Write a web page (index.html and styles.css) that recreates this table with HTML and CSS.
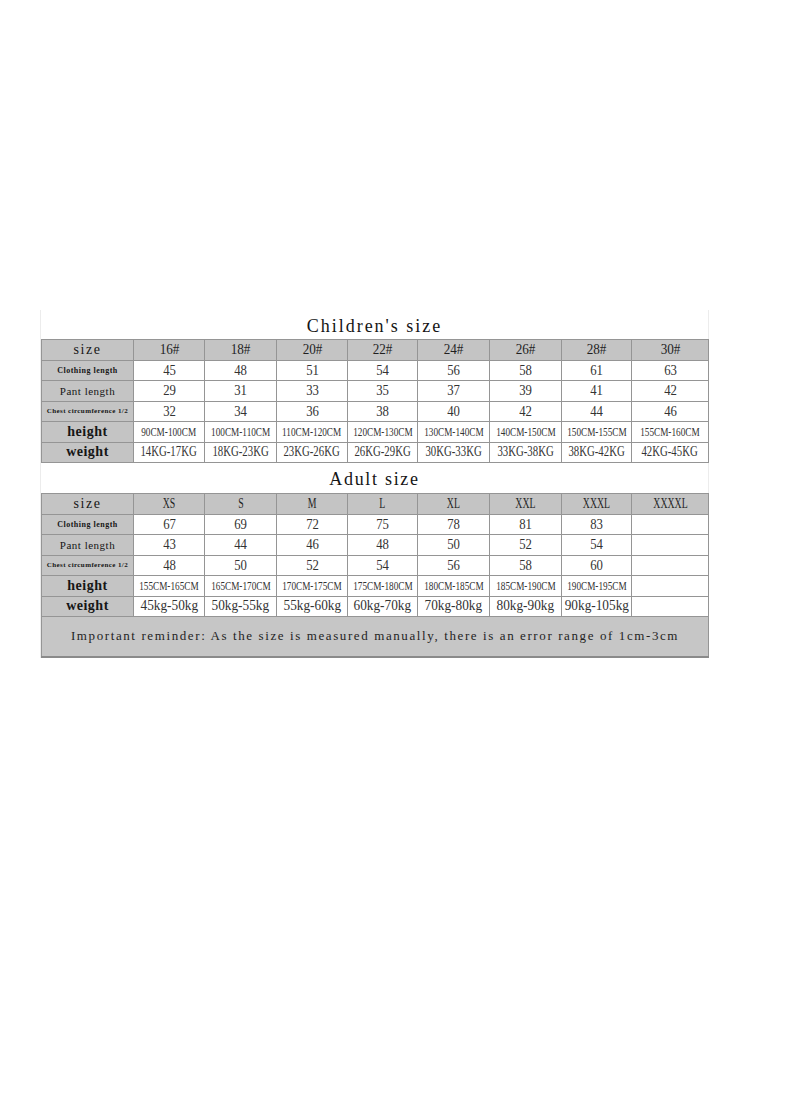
FILE: index.html
```html
<!DOCTYPE html>
<html lang="en">
<head>
<meta charset="utf-8">
<title>Size chart</title>
<link rel="stylesheet" href="styles.css">
</head>
<body>
<div class="page">
  <div class="sheet">
    <div class="title">Children's size</div>
    <table class="chart">
      <colgroup>
        <col class="c0"><col class="c1"><col class="c2"><col class="c3"><col class="c4"><col class="c5"><col class="c6"><col class="c7"><col class="c8">
      </colgroup>
      <tr class="head">
        <th class="lab l-size">size</th><th><span class="s">16#</span></th><th><span class="s">18#</span></th><th><span class="s">20#</span></th><th><span class="s">22#</span></th><th><span class="s">24#</span></th><th><span class="s">26#</span></th><th><span class="s">28#</span></th><th><span class="s">30#</span></th>
      </tr>
      <tr class="num">
        <th class="lab l-cloth">Clothing length</th><td><span class="s">45</span></td><td><span class="s">48</span></td><td><span class="s">51</span></td><td><span class="s">54</span></td><td><span class="s">56</span></td><td><span class="s">58</span></td><td><span class="s">61</span></td><td><span class="s">63</span></td>
      </tr>
      <tr class="num">
        <th class="lab l-pant">Pant length</th><td><span class="s">29</span></td><td><span class="s">31</span></td><td><span class="s">33</span></td><td><span class="s">35</span></td><td><span class="s">37</span></td><td><span class="s">39</span></td><td><span class="s">41</span></td><td><span class="s">42</span></td>
      </tr>
      <tr class="num">
        <th class="lab l-chest">Chest circumference 1/2</th><td><span class="s">32</span></td><td><span class="s">34</span></td><td><span class="s">36</span></td><td><span class="s">38</span></td><td><span class="s">40</span></td><td><span class="s">42</span></td><td><span class="s">44</span></td><td><span class="s">46</span></td>
      </tr>
      <tr class="rng-h">
        <th class="lab l-big">height</th><td><span class="s">90CM-100CM</span></td><td><span class="s">100CM-110CM</span></td><td><span class="s">110CM-120CM</span></td><td><span class="s">120CM-130CM</span></td><td><span class="s">130CM-140CM</span></td><td><span class="s">140CM-150CM</span></td><td><span class="s">150CM-155CM</span></td><td><span class="s">155CM-160CM</span></td>
      </tr>
      <tr class="rng-w">
        <th class="lab l-big">weight</th><td><span class="s">14KG-17KG</span></td><td><span class="s">18KG-23KG</span></td><td><span class="s">23KG-26KG</span></td><td><span class="s">26KG-29KG</span></td><td><span class="s">30KG-33KG</span></td><td><span class="s">33KG-38KG</span></td><td><span class="s">38KG-42KG</span></td><td><span class="s">42KG-45KG</span></td>
      </tr>
    </table>
    <div class="title title-adult">Adult size</div>
    <table class="chart">
      <colgroup>
        <col class="c0"><col class="c1"><col class="c2"><col class="c3"><col class="c4"><col class="c5"><col class="c6"><col class="c7"><col class="c8">
      </colgroup>
      <tr class="head head-adult">
        <th class="lab l-size">size</th><th><span class="s">XS</span></th><th><span class="s">S</span></th><th><span class="s">M</span></th><th><span class="s">L</span></th><th><span class="s">XL</span></th><th><span class="s">XXL</span></th><th><span class="s">XXXL</span></th><th><span class="s">XXXXL</span></th>
      </tr>
      <tr class="num">
        <th class="lab l-cloth">Clothing length</th><td><span class="s">67</span></td><td><span class="s">69</span></td><td><span class="s">72</span></td><td><span class="s">75</span></td><td><span class="s">78</span></td><td><span class="s">81</span></td><td><span class="s">83</span></td><td></td>
      </tr>
      <tr class="num">
        <th class="lab l-pant">Pant length</th><td><span class="s">43</span></td><td><span class="s">44</span></td><td><span class="s">46</span></td><td><span class="s">48</span></td><td><span class="s">50</span></td><td><span class="s">52</span></td><td><span class="s">54</span></td><td></td>
      </tr>
      <tr class="num">
        <th class="lab l-chest">Chest circumference 1/2</th><td><span class="s">48</span></td><td><span class="s">50</span></td><td><span class="s">52</span></td><td><span class="s">54</span></td><td><span class="s">56</span></td><td><span class="s">58</span></td><td><span class="s">60</span></td><td></td>
      </tr>
      <tr class="rng-h">
        <th class="lab l-big">height</th><td><span class="s">155CM-165CM</span></td><td><span class="s">165CM-170CM</span></td><td><span class="s">170CM-175CM</span></td><td><span class="s">175CM-180CM</span></td><td><span class="s">180CM-185CM</span></td><td><span class="s">185CM-190CM</span></td><td><span class="s">190CM-195CM</span></td><td></td>
      </tr>
      <tr class="rng-kg">
        <th class="lab l-big">weight</th><td><span class="s">45kg-50kg</span></td><td><span class="s">50kg-55kg</span></td><td><span class="s">55kg-60kg</span></td><td><span class="s">60kg-70kg</span></td><td><span class="s">70kg-80kg</span></td><td><span class="s">80kg-90kg</span></td><td><span class="s">90kg-105kg</span></td><td></td>
      </tr>
      <tr class="note">
        <td colspan="9">Important reminder: As the size is measured manually, there is an error range of 1cm-3cm</td>
      </tr>
    </table>
  </div>
</div>
</body>
</html>
```

FILE: styles.css
```css
html, body {
  margin: 0;
  padding: 0;
  background: #ffffff;
}

.page {
  width: 800px;
  height: 1096px;
  padding: 310px 0 0 41px;
  box-sizing: border-box;
}

.sheet {
  width: 667px;
  box-shadow: -1px 0 0 #ececec, 1px 0 0 #ececec;
}

.title {
  height: 29px;
  display: flex;
  align-items: center;
  justify-content: center;
  padding-top: 3px;
  box-sizing: border-box;
  font-family: "Liberation Serif", serif;
  font-size: 18px;
  letter-spacing: 2px;
  color: #151515;
}

.title-adult {
  height: 30px;
  padding-top: 2px;
  letter-spacing: 1.7px;
}

.chart {
  width: 667px;
  table-layout: fixed;
  border-collapse: collapse;
  border: 1px solid #8a8a8a;
}

.c0 { width: 92px; }
.c1 { width: 71px; }
.c2 { width: 72px; }
.c3 { width: 71px; }
.c4 { width: 70px; }
.c5 { width: 72px; }
.c6 { width: 72px; }
.c7 { width: 70px; }
.c8 { width: 77px; }

.chart tr {
  height: 20.5px;
}

.chart th,
.chart td {
  border: 1px solid #959595;
  padding: 0;
  text-align: center;
  vertical-align: middle;
  white-space: nowrap;
  overflow: hidden;
  color: #2a2a2a;
  font-weight: normal;
  font-family: "Liberation Serif", serif;
  background: #ffffff;
}

.s {
  display: inline-block;
  margin: 0 -20px;
  transform-origin: 50% 50%;
}

.chart .lab {
  background: #c4c4c4;
  color: #161616;
}

.head th {
  background: #c4c4c4;
  font-size: 14px;
  color: #1f1f1f;
}

.head .s {
  transform: scaleX(0.94);
}

.head-adult .s {
  transform: scaleX(0.7);
}

.head th.lab {
  font-size: 14px;
  letter-spacing: 1.5px;
}

.l-cloth {
  font-size: 8px;
  font-weight: bold !important;
  letter-spacing: 0.5px;
}

.l-pant {
  font-size: 11px;
  letter-spacing: 0.5px;
}

.l-chest {
  font-size: 7px;
  font-weight: bold !important;
  letter-spacing: 0.4px;
}

.l-big {
  font-size: 14px;
  font-weight: bold !important;
  letter-spacing: 0.5px;
}

.num td {
  font-size: 15px;
  color: #333333;
}

.num .s {
  transform: scaleX(0.85);
}

.rng-h td {
  font-size: 13px;
  color: #333333;
}

.rng-h .s {
  transform: scaleX(0.71);
}

.rng-w td {
  font-size: 14px;
  color: #333333;
}

.rng-w .s {
  transform: scaleX(0.77);
}

.rng-kg td {
  font-size: 14px;
  color: #333333;
}

.rng-kg .s {
  transform: scaleX(0.95);
}

.chart tr.note {
  height: 40px;
}

.note td {
  background: #c6c6c6;
  font-size: 13px;
  letter-spacing: 1.6px;
  color: #1f1f1f;
  border-bottom: 2px solid #8a8a8a;
}
```
